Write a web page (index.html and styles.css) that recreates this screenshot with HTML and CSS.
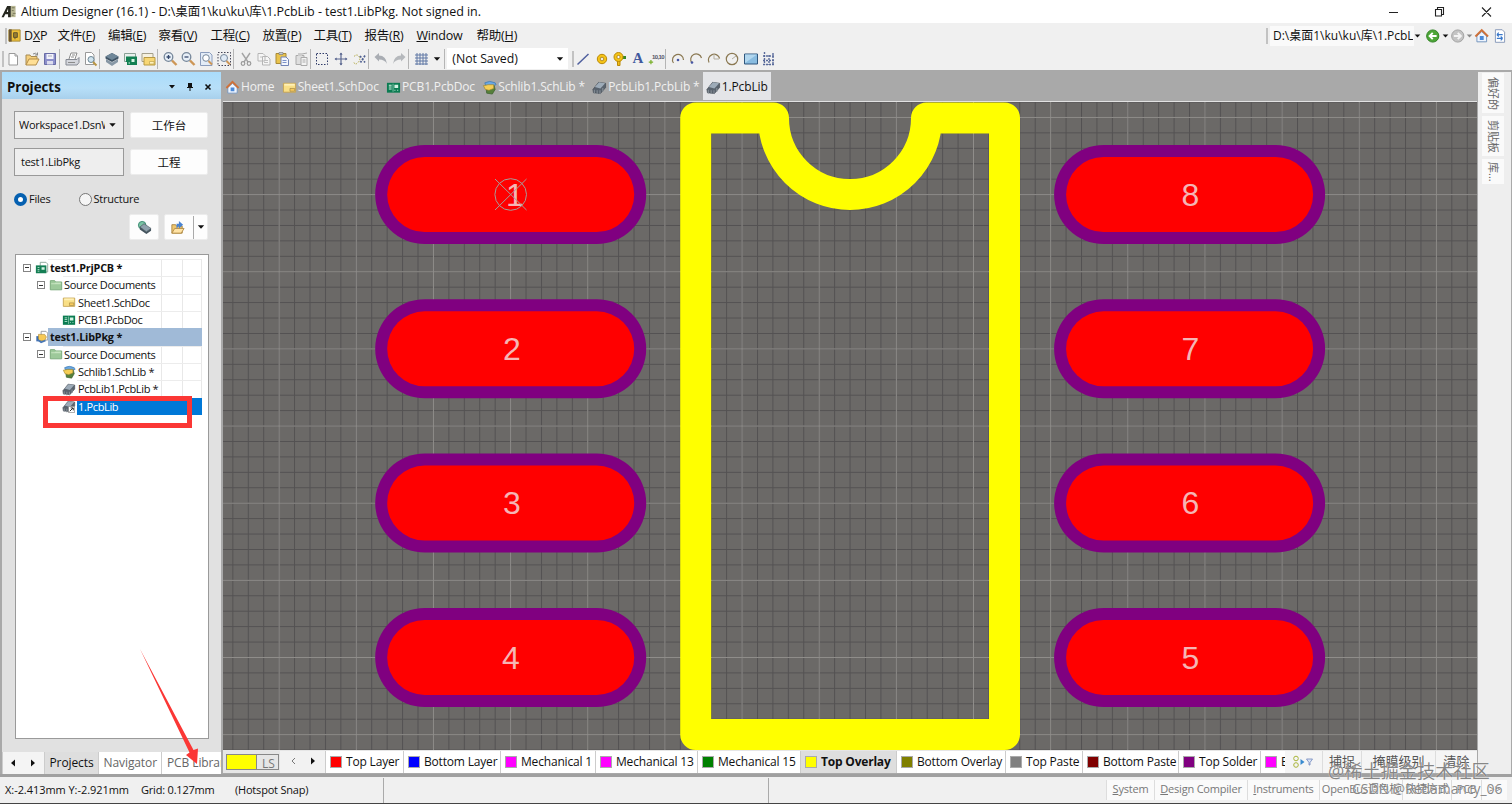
FILE: index.html
```html
<!DOCTYPE html>
<html lang="zh-CN">
<head>
<meta charset="UTF-8" />
<meta name="viewport" content="width=device-width, initial-scale=1.0" />
<title>Altium Designer (16.1)</title>
<link rel="stylesheet" href="styles.css">
</head>
<body>

<!-- Icons -->
<svg class="sprite" width="0" height="0">
<symbol id="i-new" viewBox="0 0 16 16"><path d="M4 2.5h6l2.500 2.500v9H4z" fill="#fff" stroke="#9a9a9a"/><path d="M10 2.500V5h2.500" fill="none" stroke="#9a9a9a"/></symbol>
<symbol id="i-open" viewBox="0 0 16 16"><path d="M2 14V4h4l1 1.500h6V8" fill="#f5cf7c" stroke="#a68a52"/><path d="M2 14l3-6h10l-3 6z" fill="#ffdf95" stroke="#b38d49"/><path d="M9 3q3-2 4.500 1M13.500 1.500V4H11" fill="none" stroke="#888"/></symbol>
<symbol id="i-save" viewBox="0 0 16 16"><path d="M2.500 2.500h11v11h-11z" fill="#8c8fca" stroke="#696ca6"/><path d="M4.500 3h7v5h-7z" fill="#f2f2fa"/><path d="M5 10h6v3.500H5z" fill="#dde"/><path d="M6 5h4" stroke="#aab"/></symbol>
<symbol id="i-print" viewBox="0 0 16 16"><path d="M5 8l2-6h6l-2 6" fill="#fff" stroke="#8a8a8a"/><path d="M2 8.500h11l2-2v5l-2 2.500H2z" fill="#d4d6dc" stroke="#858992"/><path d="M4 11.500h7M8 4h3M7 6h3" stroke="#8a8a8a"/></symbol>
<symbol id="i-preview" viewBox="0 0 16 16"><path d="M3.500 1.500h6L12 4v9.500H3.500z" fill="#fff" stroke="#999"/><circle cx="9" cy="8.500" r="3" fill="#cfe3ee" stroke="#6d8795"/><path d="M11 11l3.500 3.500" stroke="#b99543" stroke-width="2"/></symbol>
<symbol id="i-layers" viewBox="0 0 16 16"><path d="M2 8l6 3.500L14 8v3l-6 4-6-4z" fill="#8797a5"/><path d="M1.500 5.500L8 2l6.500 3.500v2L8 11 1.500 7.500z" fill="#3e5264"/><path d="M1.500 5.500L8 2l6.500 3.500L8 9z" fill="#6f8799"/></symbol>
<symbol id="i-pcbs" viewBox="0 0 16 16"><path d="M2.500 2.500h11v8h-11z" fill="#e9f0ec" stroke="#8aa196"/><path d="M4 5.500h11V14H5v-3H4z" fill="#128052"/><path d="M9.500 8h3v3h-3zM6.500 11.500h1.500v1H6.500z" fill="#d6f4e4"/></symbol>
<symbol id="i-schs" viewBox="0 0 16 16"><path d="M2 2.500h11v8H2z" fill="#f6f1df" stroke="#a5a08b"/><path d="M4 6.500h11v7.500H4z" fill="#f8d775" stroke="#b99a43"/><path d="M9.500 10.500H14V13H9.500z" fill="#fff2bd" stroke="#b99a43" stroke-width=".6"/></symbol>
<symbol id="i-zoomin" viewBox="0 0 16 16"><circle cx="6.500" cy="6" r="4.300" fill="#e7eff7" stroke="#76879a" stroke-width="1.300"/><path d="M4.500 6h4M6.500 4v4" stroke="#36496e" stroke-width="1.300"/><path d="M10 9.500l4.500 4.500" stroke="#cd9656" stroke-width="2.400"/></symbol>
<symbol id="i-zoomout" viewBox="0 0 16 16"><circle cx="6.500" cy="6" r="4.300" fill="#e7eff7" stroke="#76879a" stroke-width="1.300"/><path d="M4.500 6h4" stroke="#36496e" stroke-width="1.300"/><path d="M10 9.500l4.500 4.500" stroke="#cd9656" stroke-width="2.400"/></symbol>
<symbol id="i-zoomdoc" viewBox="0 0 16 16"><path d="M2.500 1.500h9L14 4v10.500H2.500z" fill="#e3ecf7" stroke="#8b9dbd"/><circle cx="8" cy="7" r="3.300" fill="#fff" stroke="#76879a"/><path d="M10.500 10l3.500 3.500" stroke="#cd9656" stroke-width="2"/></symbol>
<symbol id="i-zoomsel" viewBox="0 0 16 16"><path d="M2 1.500h12.500v13H2z" fill="none" stroke="#445" stroke-dasharray="1.500 1.500"/><circle cx="8" cy="7" r="3.500" fill="#dfeaf5" stroke="#76879a"/><path d="M10.500 10l3.500 3.500" stroke="#cd9656" stroke-width="2"/></symbol>
<symbol id="i-cut" viewBox="0 0 16 16"><path d="M4 2l6 9M12 2L6 11" stroke="#a4a4a4" stroke-width="1.400" fill="none"/><circle cx="5" cy="12.500" r="1.800" fill="none" stroke="#999" stroke-width="1.200"/><circle cx="11" cy="12.500" r="1.800" fill="none" stroke="#999" stroke-width="1.200"/></symbol>
<symbol id="i-copy" viewBox="0 0 16 16"><path d="M2 2.500h5l2 2V10H2zM6.500 5.500h5l2.500 2.500v6H6.500z" fill="#f6f6f6" stroke="#b5b5b5"/><path d="M8 9.500h4M8 11.500h4M4 6h2" stroke="#c0c0c0"/></symbol>
<symbol id="i-paste" viewBox="0 0 16 16"><path d="M2 2.500h10v10H2z" fill="#e9c34c" stroke="#a98a37"/><path d="M5 1.500h4v2H5z" fill="#c7ccd4" stroke="#777" stroke-width=".6"/><path d="M7 6h5l2.500 2.500v6H7z" fill="#f3f6fd" stroke="#7283b5"/><path d="M8.500 9.500h4M8.500 11.500h4" stroke="#7b91c9"/></symbol>
<symbol id="i-paste2" viewBox="0 0 16 16"><path d="M3 4.500h8v9H3z" fill="#dedede" stroke="#aaa"/><path d="M5 2h4v3H5z" fill="#ccc"/><path d="M8 6.500h6v8H8z" fill="#f3f3f3" stroke="#aaa"/><path d="M9.500 9h3M9.500 11h3M9 3l5-1" stroke="#aaa"/></symbol>
<symbol id="i-select" viewBox="0 0 16 16"><path d="M2.500 2.500h11v11h-11z" fill="none" stroke="#2e3a68" stroke-dasharray="1.500 1.500"/></symbol>
<symbol id="i-move" viewBox="0 0 16 16"><path d="M8 2v12M2 8h12" stroke="#5a6790" stroke-width="1.200"/><path d="M8 1.500l1.600 2.200H6.400zM8 14.500l1.600-2.200H6.400zM1.500 8l2.200-1.600v3.200zM14.500 8l-2.200-1.600v3.200z" fill="#5a6790"/></symbol>
<symbol id="i-desel" viewBox="0 0 16 16"><path d="M3 5.500q3-3 5 0t-1 6-4 0" fill="none" stroke="#b0a640" stroke-dasharray="1.500 1.200"/><path d="M9 5l5 6.500M14 4.500l-4.500 7" stroke="#506090" stroke-dasharray="2 1.300" stroke-width="1.700"/></symbol>
<symbol id="i-undo" viewBox="0 0 16 16"><path d="M1.500 6L6 2v2.500q7 0 8 8.500-2-4.500-8-4.500V10.500z" fill="#a9adb3"/></symbol>
<symbol id="i-redo" viewBox="0 0 16 16"><path d="M14.500 6L10 2v2.500q-7 0-8 8.500 2-4.500 8-4.500V10.500z" fill="#b5b8bc"/></symbol>
<symbol id="i-grid" viewBox="0 0 16 16"><path d="M4 2v12M7 2v12M10 2v12M13 2v12M2 4h13M2 7h13M2 10h13M2 13h13" stroke="#6078a5" stroke-width="1"/></symbol>
<symbol id="i-line" viewBox="0 0 16 16"><path d="M2.500 13.500L13.500 3" stroke="#4f5f9e" stroke-width="1.500"/></symbol>
<symbol id="i-pad" viewBox="0 0 16 16"><circle cx="8" cy="8" r="4.700" fill="#f6c417" stroke="#b98908"/><circle cx="8" cy="8" r="1.800" fill="#f4eddb" stroke="#967010" stroke-width=".7"/></symbol>
<symbol id="i-via" viewBox="0 0 16 16"><path d="M5.500 9v5.500h2.500V9" fill="#f0be1c" stroke="#b98908"/><path d="M9 6.500h5" stroke="#398a26" stroke-width="3"/><circle cx="6.500" cy="6" r="4.500" fill="#f6c417" stroke="#b98908"/><circle cx="6.500" cy="6" r="1.600" fill="#fff" stroke="#967010" stroke-width=".7"/></symbol>
<symbol id="i-coord" viewBox="0 0 16 16"><path d="M2 11.500h5M4.500 9v5" stroke="#79b02a" stroke-width="1.400"/></symbol>
<symbol id="i-arc1" viewBox="0 0 16 16"><path d="M3.500 12A5.500 5.500 0 1 1 13.500 9" fill="none" stroke="#8b7953" stroke-width="1.200"/><circle cx="8" cy="9" r="1.300" fill="#4657a5"/></symbol>
<symbol id="i-arc2" viewBox="0 0 16 16"><path d="M4 12A5.500 5.500 0 1 1 13.500 7" fill="none" stroke="#8b7953" stroke-width="1.200"/><circle cx="4" cy="11.500" r="1.300" fill="#4657a5"/></symbol>
<symbol id="i-arc3" viewBox="0 0 16 16"><path d="M3 11.500A5.700 5.700 0 1 1 13.600 7.500" fill="none" stroke="#8b7953" stroke-width="1.200"/><path d="M8 3v5h5" fill="none" stroke="#b4afa0"/></symbol>
<symbol id="i-circ" viewBox="0 0 16 16"><circle cx="8" cy="8" r="5.700" fill="none" stroke="#8b7953" stroke-width="1.200"/><path d="M8 8l4-3" stroke="#b4afa0"/></symbol>
<symbol id="i-rect" viewBox="0 0 16 16"><path d="M1.500 3h13v10h-13z" fill="#89bce0" stroke="#30577e"/><path d="M2 3.500h12L2 12z" fill="#b2d7ef"/></symbol>
<symbol id="i-array" viewBox="0 0 16 16"><path d="M3.500 1v13M8 4v10M12 2v12M2 5h12M2 9.500h12M2 13.500h12" stroke="#5a6b9b" stroke-width="1.400" stroke-dasharray="2 1"/></symbol>
<symbol id="i-home" viewBox="0 0 16 16"><path d="M3 8v6h10V8L8 3.500z" fill="#eef5ff" stroke="#7595bd"/><path d="M1.500 8.500L8 2l6.500 6.500" fill="none" stroke="#cf7139" stroke-width="2"/><path d="M6 8h4v4H6z" fill="#4a89d9"/></symbol>
<symbol id="i-sch" viewBox="0 0 16 16"><path d="M1.500 3.500h13v9.500h-13z" fill="#f9df86" stroke="#c5a354"/><path d="M8.500 9h5v3h-5z" fill="#f6c95c" stroke="#9f8441" stroke-width=".7"/><path d="M2.500 4h11v2h-11z" fill="#fff0b6"/></symbol>
<symbol id="i-pcb" viewBox="0 0 16 16"><path d="M1 3h14v10.500H1z" fill="#0b7c52"/><path d="M9 5h4v3.500H9zM3 5h3v1H3zM3 7h3v1H3zM3 9h3v1H3zM9 10.500h1v1H9zM12 10.500h1v1h-1z" fill="#d4f3e4"/><path d="M7.500 4v8.500" stroke="#d4f3e4" stroke-width=".6"/></symbol>
<symbol id="i-schlib" viewBox="0 0 16 16"><path d="M3 3q5-3 11 0l1 2-3 1H4z" fill="#6ba8e3" stroke="#3773ab" stroke-width=".7"/><path d="M4 6h9l1 4-3 5-6-1z" fill="#55803c" stroke="#385b29" stroke-width=".7"/><path d="M1.500 6l5-1h6v4l-5 2-4-1z" fill="#f5ce55" stroke="#9a8230" stroke-width=".7"/></symbol>
<symbol id="i-pcblib" viewBox="0 0 16 16"><path d="M1 10l6-7.500 7.500 1V8L9 14.500l-7.500-1z" fill="#59636e" stroke="#414850" stroke-width=".7"/><path d="M3 7.500L7.500 2.500l6.500 1L9 9z" fill="#9dabb8"/><path d="M2.500 10.500v4M5.500 11v4M8.500 11v4M11.500 8.500v4" stroke="#858e96" stroke-width="1.200"/></symbol>
<symbol id="i-prj" viewBox="0 0 16 16"><path d="M6 1.500h6.500l2 2v9H6z" fill="#fff" stroke="#86a193"/><path d="M1 5h12v9H1z" fill="#147e54"/><path d="M7.500 7h3.500v3H7.500zM3 7h2v1H3zM3 9h2v1H3zM3 11h2v1H3z" fill="#d4f3e4"/></symbol>
<symbol id="i-lib" viewBox="0 0 16 16"><path d="M7 1.500h5.500l2 2v8H7z" fill="#fff" stroke="#8e9299"/><path d="M1.500 7h5v6h-5z" fill="#3c6db1"/><path d="M4 5h7l2 3-2 4H4z" fill="#f6c957" stroke="#ad8832" stroke-width=".7"/><path d="M3 11l4 3 5-2" stroke="#4776b4" stroke-width="2" fill="none"/></symbol>
<symbol id="i-folder" viewBox="0 0 16 16"><path d="M1.500 3h5l1 1.500h7v9h-13z" fill="#9dc99a" stroke="#74a673"/><path d="M2.500 6h4l1-1h6v2h-11z" fill="#c6e4c0"/></symbol>
<symbol id="i-dxp" viewBox="0 0 16 16"><path d="M2 2h12v12H2z" fill="#edbf38" stroke="#a68a3b"/><path d="M2 1.500h3v13H2z" fill="#6d5834"/><path d="M7 5h4v5H7zM8.500 10v2" fill="#9a7d2e" stroke="#5c522e"/></symbol>
<symbol id="i-back" viewBox="0 0 16 16"><circle cx="8" cy="8" r="6.300" fill="#4ca536" stroke="#2e8122"/><path d="M12 8H5M8 4.800L4.800 8 8 11.200" fill="none" stroke="#fff" stroke-width="2"/></symbol>
<symbol id="i-fwd" viewBox="0 0 16 16"><circle cx="8" cy="8" r="6.300" fill="#c4c4c4" stroke="#a1a1a1"/><path d="M4 8h7M8 4.800L11.200 8 8 11.200" fill="none" stroke="#f4f4f4" stroke-width="2"/></symbol>
<symbol id="i-refresh" viewBox="0 0 16 16"><path d="M3.500 1.500h7L13 4v10.500H3.500z" fill="#fff" stroke="#8799b9"/><path d="M5 6.500h6M5 6.500l2-2M5 6.500l2 2M11 10.500H5M11 10.500l-2-2M11 10.500l-2 2" stroke="#3978cb" stroke-width="1.200"/></symbol>
<symbol id="i-chip" viewBox="0 0 16 16"><circle cx="5.500" cy="5.500" r="4" fill="#7bc3a5" stroke="#378a70"/><path d="M3 7.500l4.500-3.500 7.500 5-5 3.500z" fill="#8fa1ac" stroke="#4c5a62" stroke-width=".7"/><path d="M3 7.500l7 5 5-3.500v2.500L10 15l-7-5z" fill="#44545e"/></symbol>
<symbol id="i-export" viewBox="0 0 16 16"><path d="M2 14V5h4l1 1.500h6V14z" fill="#f1c76d" stroke="#aa8747"/><path d="M2 14l3-5h10l-3 5z" fill="#ffe3a5" stroke="#b38d49"/><path d="M7 9V4h2.500V1L14 5l-4.500 4V6.500z" fill="#4a83d0"/></symbol>
<symbol id="i-shortcut" viewBox="0 0 8 8"><path d="M.5.5h7v7h-7z" fill="#fff" stroke="#777" stroke-width=".7"/><path d="M2 6l3.500-3.500M3 2.200h3V5" fill="none" stroke="#111"/></symbol>
<symbol id="i-caret" viewBox="0 0 8 8"><path d="M.8 2.200h6.400L4 5.800z" fill="currentColor"/></symbol>
</svg>

<header class="titlebar">
<svg class="logo" viewBox="0 0 16 16"><path d="M0 14L6 2h4v12H7v-3H4l-1.500 3z" fill="#26271f"/><path d="M5.500 8.500L7 5v3.500z" fill="#fff"/><path d="M10 2h5v12h-5z" fill="#b9b894"/><path d="M11 4h3M11 7h2M12 10h3M11 12h2" stroke="#77765a"/></svg>
<span class="caption">Altium Designer (16.1) - D:\桌面1\ku\ku\库\1.PcbLib - test1.LibPkg. Not signed in.</span>
<svg class="winbtns" viewBox="0 0 104 12"><path d="M1 6.500h9M47.500 3.500h6v6.500h-6zM49.500 3V1.500h6v7H54M94 1.500l9 9M103 1.500l-9 9" fill="none" stroke="#222" stroke-width="1.100"/></svg>
</header>

<div class="menubar">
<i class="handle"></i>
<nav>
<span><svg class="ic"><use href="#i-dxp"/></svg>D<u>X</u>P</span>
<span>文件(<u>F</u>)</span>
<span>编辑(<u>E</u>)</span>
<span>察看(<u>V</u>)</span>
<span>工程(<u>C</u>)</span>
<span>放置(<u>P</u>)</span>
<span>工具(<u>T</u>)</span>
<span>报告(<u>R</u>)</span>
<span><u>W</u>indow</span>
<span>帮助(<u>H</u>)</span>
</nav>
<div class="address">
<i class="handle"></i>
<div class="path"><span>D:\桌面1\ku\ku\库\1.PcbLib</span></div>
<svg class="caret"><use href="#i-caret"/></svg>
<svg class="ic"><use href="#i-back"/></svg>
<svg class="caret"><use href="#i-caret"/></svg>
<svg class="ic"><use href="#i-fwd"/></svg>
<svg class="caret dim"><use href="#i-caret"/></svg>
<svg class="ic"><use href="#i-home"/></svg>
<svg class="ic"><use href="#i-refresh"/></svg>
</div>
</div>

<div class="toolbar">
<i class="handle"></i>
<svg><use href="#i-new"/></svg><svg><use href="#i-open"/></svg><svg><use href="#i-save"/></svg><i class="sep"></i>
<svg><use href="#i-print"/></svg><svg><use href="#i-preview"/></svg><i class="sep"></i>
<svg><use href="#i-layers"/></svg><svg><use href="#i-pcbs"/></svg><svg><use href="#i-schs"/></svg><i class="sep"></i>
<svg><use href="#i-zoomin"/></svg><svg><use href="#i-zoomout"/></svg><svg><use href="#i-zoomdoc"/></svg><svg><use href="#i-zoomsel"/></svg><i class="sep"></i>
<svg><use href="#i-cut"/></svg><svg><use href="#i-copy"/></svg><svg><use href="#i-paste"/></svg><svg><use href="#i-paste2"/></svg><i class="sep"></i>
<svg><use href="#i-select"/></svg><svg><use href="#i-move"/></svg><svg><use href="#i-desel"/></svg><i class="sep"></i>
<svg><use href="#i-undo"/></svg><svg><use href="#i-redo"/></svg><i class="sep"></i>
<svg><use href="#i-grid"/></svg><svg class="caret"><use href="#i-caret"/></svg><i class="sep"></i>
<div class="combo"><span>(Not Saved)</span><svg class="caret"><use href="#i-caret"/></svg></div>
<i class="handle"></i>
<svg><use href="#i-line"/></svg><svg><use href="#i-pad"/></svg><svg><use href="#i-via"/></svg><b class="letter">A</b><b class="coord"><svg><use href="#i-coord"/></svg><small>10,10</small></b><i class="sep"></i>
<svg><use href="#i-arc1"/></svg><svg><use href="#i-arc2"/></svg><svg><use href="#i-arc3"/></svg><svg><use href="#i-circ"/></svg><svg><use href="#i-rect"/></svg><svg><use href="#i-array"/></svg>
</div>

<div class="workspace">

<!-- Projects panel -->
<aside class="panel">
<div class="panel-head"><h2>Projects</h2>
<svg viewBox="0 0 46 10"><path d="M1 3h6L4 6.500z" fill="#111"/><path d="M20 1h4v4h1v1h-6V5h1zM21.500 6h1v3h-1z" fill="#111"/><path d="M37.500 2.500l5 5M42.500 2.500l-5 5" stroke="#111" stroke-width="1.600"/></svg>
</div>
<div class="panel-body">
<div class="fields">
<div class="field"><span>Workspace1.DsnWrk</span><svg class="caret"><use href="#i-caret"/></svg></div><button>工作台</button>
<div class="field plain"><span>test1.LibPkg</span></div><button>工程</button>
</div>
<div class="radios"><label><i class="on"></i>Files</label><label><i></i>Structure</label></div>
<div class="actions">
<button><svg><use href="#i-chip"/></svg></button>
<button class="split"><svg><use href="#i-export"/></svg><em><svg class="caret"><use href="#i-caret"/></svg></em></button>
</div>
<div class="tree">
<div class="row bold"><i class="box"></i><svg><use href="#i-prj"/></svg><span>test1.PrjPCB *</span></div>
<div class="row l1"><i class="box"></i><svg><use href="#i-folder"/></svg><span>Source Documents</span></div>
<div class="row l2"><svg><use href="#i-sch"/></svg><span>Sheet1.SchDoc</span></div>
<div class="row l2"><svg><use href="#i-pcb"/></svg><span>PCB1.PcbDoc</span></div>
<div class="row bold current"><i class="box"></i><svg><use href="#i-lib"/></svg><span>test1.LibPkg *</span></div>
<div class="row l1"><i class="box"></i><svg><use href="#i-folder"/></svg><span>Source Documents</span></div>
<div class="row l2"><svg><use href="#i-schlib"/></svg><span>Schlib1.SchLib *</span></div>
<div class="row l2"><svg><use href="#i-pcblib"/></svg><span>PcbLib1.PcbLib *</span></div>
<div class="row l2 selected"><svg viewBox="0 0 14 14"><use href="#i-pcblib" width="14" height="14"/><use href="#i-shortcut" x="6" y="7" width="7" height="7"/></svg><span>1.PcbLib</span></div>
</div>
</div>
<div class="panel-tabs">
<span class="nav-arrows"><svg viewBox="0 0 34 10"><path d="M10 1.500v7L6 5zM26 1.500v7L30 5z" fill="#111"/></svg></span>
<span class="active">Projects</span><span>Navigator</span><span>PCB Library</span>
</div>
</aside>

<!-- Document area -->
<main>
<div class="doc-tabs">
<span><svg><use href="#i-home"/></svg>Home</span>
<span><svg><use href="#i-sch"/></svg>Sheet1.SchDoc</span>
<span><svg><use href="#i-pcb"/></svg>PCB1.PcbDoc</span>
<span><svg><use href="#i-schlib"/></svg>Schlib1.SchLib *</span>
<span><svg><use href="#i-pcblib"/></svg>PcbLib1.PcbLib *</span>
<span class="active"><svg><use href="#i-pcblib"/></svg>1.PcbLib</span>
</div>
<svg class="board" viewBox="223 102 1254 648">
<defs>
<pattern id="minor" x="510.100" y="194.100" width="15.430" height="15.430" patternUnits="userSpaceOnUse"><path d="M0 .5h15.430M.5 0v15.430" stroke="#535152"/></pattern>
<pattern id="major" x="510.100" y="194.100" width="77.150" height="77.150" patternUnits="userSpaceOnUse"><path d="M0 .5h77.150M.5 0v77.150" stroke="#8f8d8a"/></pattern>
<g id="padshape"><rect x="-135.500" y="-49.500" width="271" height="99" rx="49.500" fill="#800080"/><rect x="-123.500" y="-37.500" width="247" height="75" rx="37.500" fill="#f00"/></g>
</defs>
<rect x="223" y="102" width="1254" height="648" fill="#6b6967"/>
<rect x="223" y="102" width="1254" height="648" fill="url(#minor)"/>
<rect x="223" y="102" width="1254" height="648" fill="url(#major)"/>
<path d="M773.500 118H695.700V734.500H1004.500V118H926.500A76.500 76.500 0 0 1 773.500 118" fill="none" stroke="#ff0" stroke-width="31" stroke-linejoin="round" stroke-linecap="round"/>
<use href="#padshape" x="510.700" y="194.500"/><use href="#padshape" x="510.700" y="348.800"/><use href="#padshape" x="510.700" y="503.100"/><use href="#padshape" x="510.700" y="657.400"/>
<use href="#padshape" x="1189.600" y="194.500"/><use href="#padshape" x="1189.600" y="348.800"/><use href="#padshape" x="1189.600" y="503.100"/><use href="#padshape" x="1189.600" y="657.400"/>
<g class="pins">
<text x="515" y="206">1</text><text x="512" y="360">2</text><text x="512" y="514">3</text><text x="511" y="669">4</text>
<text x="1190.500" y="669">5</text><text x="1190.500" y="514">6</text><text x="1190.500" y="360">7</text><text x="1190.500" y="206">8</text>
</g>
<path d="M495 179l31.500 31M526.500 179L495 210" stroke="#a79c98"/><circle cx="510.700" cy="194.500" r="15.800" fill="none" stroke="#a79c98"/>
</svg>
<div class="layers">
<div class="current-layer"><i></i><span>LS</span></div>
<div class="scroll"><svg viewBox="0 0 34 10"><path d="M9 2L6 5l3 3" fill="none" stroke="#777"/><path d="M25 1.500v7L29 5z" fill="#111"/></svg></div>
<span><i class="c-red"></i>Top Layer</span>
<span><i class="c-blue"></i>Bottom Layer</span>
<span><i class="c-magenta"></i>Mechanical 1</span>
<span><i class="c-magenta"></i>Mechanical 13</span>
<span><i class="c-green"></i>Mechanical 15</span>
<span class="active"><i class="c-yellow"></i>Top Overlay</span>
<span><i class="c-olive"></i>Bottom Overlay</span>
<span><i class="c-gray"></i>Top Paste</span>
<span><i class="c-maroon"></i>Bottom Paste</span>
<span><i class="c-purple"></i>Top Solder</span>
<span><i class="c-magenta"></i>Bottom Solder</span>
<div class="filter"><svg viewBox="0 0 22 14"><circle cx="4" cy="3.500" r="2.300" fill="none" stroke="#a9b539"/><circle cx="4" cy="10" r="2.300" fill="none" stroke="#a9b539"/><path d="M8.500 4v6l4-3z" fill="#398bd0"/><path d="M14.500 4h6l-2.500 3.500V10h-1V7.500z" fill="#dce6f6" stroke="#7086bd" stroke-width=".8"/></svg></div>
<div class="tool">捕捉</div><div class="tool">掩膜级别</div><div class="tool">清除</div>
</div>
</main>

<aside class="side">
<span>偏好的</span><span>剪贴板</span><span>库...</span>
</aside>
</div>

<footer class="status">
<span class="pos">X:-2.413mm Y:-2.921mm</span><span class="grid">Grid: 0.127mm</span><span class="snap">(Hotspot Snap)</span><span class="cell"></span>
<div class="status-tabs"><span><u>S</u>ystem</span><span><u>D</u>esign Compiler</span><span><u>I</u>nstruments</span><span>OpenBus调色板</span><span>快捷方式</span><span>PCB</span><span>&gt;&gt;</span></div>
</footer>

<!-- Annotations over the window -->
<div class="mark-box"></div>
<svg class="mark-arrow" viewBox="0 0 60 118"><path d="M0 0L53.500 101 58 99.500 57 115 46 106l3.500-2.500z" fill="#fb3735"/></svg>
<div class="wm wm-big">@稀土掘金技术社区</div>
<div class="wm wm-small">CSDN @Redamancy_06</div>

</body>
</html>
```
FILE: styles.css
```css
/* Window */
* { box-sizing: border-box; }
body {
  margin: 0;
  width: 1512px;
  height: 804px;
  overflow: hidden;
  display: flex;
  flex-direction: column;
  background: #f0f0f0;
  color: #111;
  font-family: "Open Sans", "Noto Sans CJK SC", sans-serif;
  font-size: 12px;
  line-height: 16px;
  white-space: nowrap;
}
.sprite { position: absolute; }
svg { display: block; flex: none; }
u { text-underline-offset: 1px; }
.ic { width: 16px; height: 16px; }
.caret { width: 8px; height: 8px; }
.dim { color: #888; }
.handle {
  flex: none;
  width: 2px;
  height: 16px;
  background: #c2c2c2;
}

/* Title bar */
.titlebar {
  flex: none;
  height: 23px;
  display: flex;
  align-items: center;
  background: #fff;
  padding: 0 20px 0 1px;
}
.logo { width: 16px; height: 15px; margin-right: 4px; }
.caption { font-size: 12.5px; letter-spacing: -.05px; }
.winbtns { width: 104px; height: 12px; margin-left: auto; }

/* Menu */
.menubar {
  flex: none;
  height: 24px;
  display: flex;
  align-items: center;
  padding: 1px 0 0 5px;
}
.menubar nav {
  display: grid;
  grid-template-columns: 50.500px 50.500px 50.500px 52px 52px 51px 51px 52px 60px 60px;
  font-size: 12.5px;
  letter-spacing: -.2px;
}
.menubar nav span { display: flex; align-items: center; }
.menubar nav .ic { width: 15px; height: 15px; margin-right: 2px; }
.address {
  display: flex;
  align-items: center;
  margin-left: auto;
  padding-right: 5px;
}
.address .handle { margin-right: 2px; }
.address .path {
  width: 144px;
  height: 20px;
  padding: 2px 0 0 3px;
  background: #fafafa;
  overflow: hidden;
  font-size: 12px;
}
.address .path span { display: block; width: 140px; overflow: hidden; }
.address .caret { width: 7px; margin: 0 1px; }
.address .path + .caret { margin: 0 4px 0 0; }
.address .ic { width: 15.500px; }
.address .ic + .ic { margin-left: 2px; }

/* Toolbar */
.toolbar {
  flex: none;
  height: 23px;
  display: flex;
  align-items: center;
  padding-left: 2.400px;
}
.toolbar > svg { width: 16px; height: 16px; margin: 0 1.100px; }
.toolbar > svg.caret { width: 8px; height: 8px; margin: 0 3px 0 3px; }
.toolbar .sep {
  flex: none;
  width: 3.600px;
  height: 20px;
  border-left: 1px solid #b5b5b5;
}
.combo {
  flex: none;
  width: 121px;
  height: 21px;
  padding: 0 4px 0 5px;
  display: flex;
  align-items: center;
  justify-content: space-between;
  background: #fff;
  font-size: 12.300px;
  margin-right: 4px;
}
.letter {
  width: 18.200px;
  text-align: center;
  color: #40589d;
  font: bold 15px "Liberation Serif", serif;
}
.coord { width: 18.200px; height: 16px; position: relative; }
.coord svg { width: 14px; height: 16px; }
.coord small {
  position: absolute;
  left: 5px;
  top: -1px;
  font: bold 6px/14px "Liberation Sans", sans-serif;
  color: #556;
  letter-spacing: -.6px;
}

/* Workspace */
.workspace {
  flex: none;
  height: 707px;
  display: flex;
  background: #a9a9a9;
  border-bottom: 3px solid #a0a0a0;
}
.panel {
  flex: none;
  width: 221px;
  margin-right: 2px;
  padding: 2px 0 0 2px;
  display: flex;
  flex-direction: column;
}
.panel-head {
  flex: none;
  height: 27px;
  padding: 2px 7px 0 5px;
  display: flex;
  align-items: center;
  justify-content: space-between;
  background: linear-gradient(#aadcfb, #b7dff8 60%, #a8d0ec);
}
.panel-head h2 { margin: 0; font-size: 13.300px; }
.panel-head svg { width: 46px; height: 10px; }
.panel-body {
  flex: 1;
  background: #e1e1e1;
  padding: 12px 13px 0 12px;
}
.fields {
  display: grid;
  grid-template-columns: 110px 78px;
  column-gap: 6px;
  row-gap: 9px;
  align-items: center;
  font-size: 11px;
}
.field {
  height: 28px;
  display: flex;
  align-items: center;
  padding: 0 6px 0 4px;
  border: 1px solid #999;
  background: #eee;
}
.field span { flex: 1; overflow: hidden; margin-right: 3px; letter-spacing: -.25px; }
.field .caret { width: 9px; }
.field.plain span { padding-left: 2px; }
button {
  height: 26px;
  padding: 0;
  border: 1px solid #ececec;
  border-radius: 2px;
  background: #fdfdfd;
  color: #111;
  font: 11.500px "Noto Sans CJK SC", sans-serif;
}
.radios {
  display: flex;
  margin-top: 15px;
  font-size: 11px;
  letter-spacing: -.25px;
}
.radios label { display: flex; align-items: center; width: 64.500px; }
.radios i {
  width: 13px;
  height: 13px;
  margin-right: 2px;
  border: 1px solid #777;
  border-radius: 50%;
  background: #f5f5f5;
}
.radios .on { border: 4px solid #0560b0; background: #fff; }
.actions {
  display: flex;
  justify-content: flex-end;
  gap: 5px;
  margin: 7px 0 14px;
}
.actions button {
  width: 30px;
  display: flex;
  align-items: center;
  justify-content: center;
}
.actions button svg { width: 15px; height: 15px; }
.actions .split { width: 44px; justify-content: space-between; padding-left: 5px; }
.actions em {
  height: 23px;
  display: flex;
  align-items: center;
  border-left: 1px solid #aaa;
  padding: 0 2.500px;
}
.actions .split .caret { width: 8px; height: 8px; }

/* Project tree */
.tree {
  width: 194px;
  height: 485px;
  padding: 4px 5px 0 6px;
  margin-left: 1px;
  border: 1px solid #9a9a9a;
  background: #fff;
  font-size: 11px;
}
.row {
  height: 17.350px;
  margin-left: -1px;
  margin-right: 1px;
  display: flex;
  align-items: center;
  background: linear-gradient(#e8e8e8, #e8e8e8) 140px 0 / 1px 100% no-repeat,
              linear-gradient(#e8e8e8, #e8e8e8) 161px 0 / 1px 100% no-repeat;
}
.row svg { width: 14px; height: 14px; }
.row span {
  flex: 1;
  height: 100%;
  line-height: 16px;
  padding-left: 1px;
  border-top: 1px solid #ececec;
  border-right: 1px solid #e8e8e8;
  letter-spacing: -.35px;
}
.row.bold { font-weight: bold; font-size: 10.800px; }
.row.bold span { letter-spacing: -.2px; padding-left: 2px; margin-left: -1px; }
.l1 { padding-left: 14px; }
.l2 { padding-left: 41px; }
.l2 svg { margin-right: 1px; }
.box {
  flex: none;
  position: relative;
  width: 8px;
  height: 8px;
  margin: 0 4px 0 2px;
  border: 1px solid #848484;
}
.box::after {
  content: "";
  position: absolute;
  left: 1px;
  top: 2.500px;
  width: 4px;
  height: 1px;
  background: #333;
}
.current span { background: #a0bad7; border-color: #a0bad7; }
.selected span { background: #0078d7; border-color: #0078d7; color: #fff; }

/* Panel tabs */
.panel-tabs {
  flex: none;
  height: 22px;
  display: flex;
  background: #e1e1e1;
  overflow: hidden;
  color: #666;
}
.panel-tabs span {
  flex: none;
  line-height: 22px;
  padding: 0 4.500px;
  background: #fff;
  border-left: 1px solid #ccc;
  letter-spacing: -.1px;
}
.panel-tabs .nav-arrows { width: 42px; padding: 6px 0 0 2px; background: #f4f4f4; }
.nav-arrows svg { width: 34px; height: 10px; }
.panel-tabs .active { background: #dedede; color: #111; }

/* Documents */
main { flex: none; width: 1254px; display: flex; flex-direction: column; }
.doc-tabs {
  flex: none;
  height: 32px;
  padding: 2px 0 1px 2px;
  display: flex;
  border-bottom: 1px solid #e2e2e2;
  color: #f0f0f0;
}
.doc-tabs span { display: flex; align-items: center; margin-right: 7.300px; padding-top: 2px; letter-spacing: -.15px; }
.doc-tabs svg { width: 15px; height: 15px; margin-right: 1px; }
.doc-tabs .active {
  margin-left: -4px;
  padding: 2px 3px 0;
  background: #e4e5e8;
  color: #111;
}
.board { width: 1254px; height: 648px; }
.pins {
  fill: #f5b5b5;
  font: 32px "Liberation Sans", sans-serif;
  text-anchor: middle;
}

/* Layer tabs */
.layers {
  height: 23px;
  display: grid;
  grid-template-columns: 57px 45px 78px 97px 95px 102px 103px 96px 109px 77px 96px 82px 25px 37px 39px 74px 42px;
  background: #e6e6e6;
  padding-top: 1px;
}
.layers > span {
  display: flex;
  align-items: center;
  overflow: hidden;
  padding-left: 4px;
  background: #fff;
  border-left: 1px solid #ccc;
  letter-spacing: -.18px;
}
.layers > span i {
  flex: none;
  width: 12px;
  height: 12px;
  margin-right: 4px;
  border: 1px solid #aaa;
}
.layers .active { background: #dedede; font-weight: bold; letter-spacing: -.2px; }
.c-red { background: #f00; }
.c-blue { background: #00f; }
.c-magenta { background: #f0f; }
.c-green { background: #008000; }
.c-yellow { background: #ff0; }
.c-olive { background: #808000; }
.c-gray { background: #808080; }
.c-maroon { background: #800000; }
.c-purple { background: #800080; }
.current-layer {
  display: flex;
  width: 53px;
  height: 16px;
  margin: 3px 0 0 3px;
  border: 1px solid #888;
  color: #777;
}
.current-layer i { width: 30px; background: #ff0; border-right: 1px solid #888; }
.current-layer span { padding-left: 5px; line-height: 17px; }
.scroll { background: #f2f2f2; padding: 5px 0 0 6px; }
.scroll svg { width: 34px; height: 10px; }
.filter { background: #f5f5f5; padding: 4px 7px; }
.filter svg { width: 22px; height: 14px; }
.tool { background: #f5f5f5; border-left: 1px solid #ddd; text-align: center; color: #555; line-height: 21px; font-size: 13px; }

/* Right dock */
.side {
  width: 33px;
  margin: 2px 0 0 1px;
  padding: 1px 4px;
  display: flex;
  flex-direction: column;
  gap: 3px;
  background: #eee;
}
.side span {
  width: 22px;
  height: 40px;
  line-height: 22px;
  background: #fafafa;
  writing-mode: vertical-rl;
  text-orientation: sideways;
  text-align: center;
  color: #666;
  font-size: 11px;
}
.side span:last-child { height: 25px; }

/* Status bar */
.status {
  flex: 1;
  display: flex;
  padding-top: 1px;
  border-bottom: 1px solid #444;
  font-size: 11px;
  line-height: 24px;
}
.pos { width: 141px; padding-left: 5px; letter-spacing: -.05px; }
.grid { width: 94px; letter-spacing: -.2px; }
.snap { width: 149px; border-right: 1px solid #aaa; letter-spacing: -.2px; }
.cell { width: 385px; border-right: 1px solid #aaa; }
.status-tabs {
  display: grid;
  grid-template-columns: 48px 93px 72px 83px 49px 30px 26px;
  margin: 2px 5px 3px auto;
  line-height: 18px;
  letter-spacing: -.2px;
  color: #777;
}
.status-tabs span { overflow: hidden; background: #fafafa; border-left: 1px solid #ddd; text-align: center; }

/* Annotations */
.mark-box {
  position: absolute;
  left: 43px;
  top: 396px;
  width: 149px;
  height: 32px;
  border: 5px solid #fb3735;
}
.mark-arrow { position: absolute; left: 140px; top: 649px; width: 60px; height: 118px; }
.wm { position: absolute; color: rgba(95, 95, 95, .75); text-shadow: 0 0 1px #fff; }
.wm-big { left: 1328px; top: 759px; font-size: 18.200px; line-height: 24px; }
.wm-small { left: 1352px; top: 781px; font-size: 14px; line-height: 16px; letter-spacing: -.05px; }
```
